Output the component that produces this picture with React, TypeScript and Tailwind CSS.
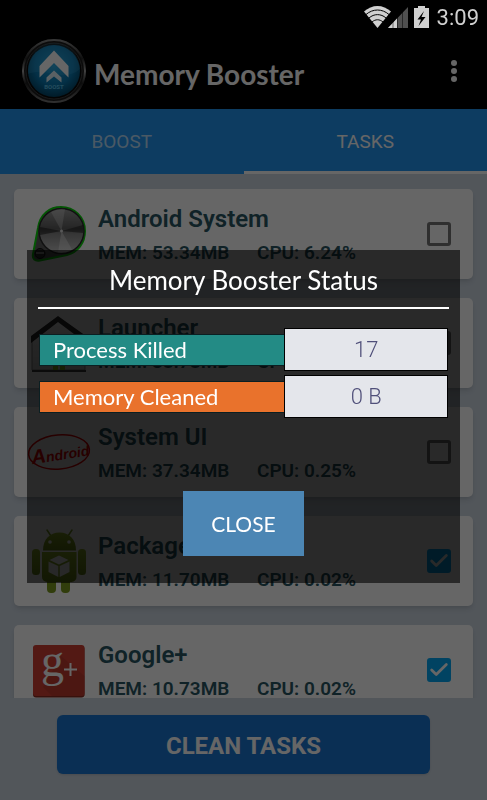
import React, { useState } from 'react';
import { Check } from 'lucide-react';

interface Task {
  name: string;
  mem: string;
  cpu: string;
  icon: React.ReactNode;
}

const BoostLogo = () => (
  <svg viewBox="0 0 66 66" className="w-[66px] h-[66px] shrink-0" aria-hidden="true">
    <defs>
      <linearGradient id="ring" x1="0" y1="0" x2="0" y2="1">
        <stop offset="0" stopColor="#8a8a8a" />
        <stop offset="0.3" stopColor="#2a2a2a" />
        <stop offset="0.5" stopColor="#a5a5a5" />
        <stop offset="0.7" stopColor="#222" />
        <stop offset="1" stopColor="#777" />
      </linearGradient>
      <radialGradient id="disc" cx="0.5" cy="0.4" r="0.62">
        <stop offset="0" stopColor="#1fa3dc" />
        <stop offset="0.6" stopColor="#0a78b0" />
        <stop offset="1" stopColor="#02405f" />
      </radialGradient>
    </defs>
    <circle cx="33" cy="33" r="32" fill="#1d1d1d" />
    <circle cx="33" cy="33" r="31" fill="none" stroke="url(#ring)" strokeWidth="2" />
    <circle cx="33" cy="33" r="28" fill="#0b0b0b" stroke="#4a4a4a" strokeWidth="0.800" />
    <circle cx="33" cy="33" r="26" fill="url(#disc)" />
    <path d="M7 31a26 26 0 0 1 52 0c-8 7-18 7-26 5S15 33 7 36z" fill="#5cc4f0" opacity="0.18" />
    <path d="M33 12.500 47.500 28v11.500L33 25 18.500 39.500V28z" fill="#fff" />
    <path d="M33 32.500l7.500 7v5L33 38.500l-7.500 6v-5z" fill="#e4f3fa" />
    <text x="33" y="51" textAnchor="middle" fontSize="6" fontWeight="700" fontFamily="Roboto, sans-serif" fill="#5cc0e8">
      BOOST
    </text>
  </svg>
);

const KnobIcon = () => (
  <svg viewBox="0 0 64 64" className="w-16 h-16 shrink-0" aria-hidden="true">
    <defs>
      <linearGradient id="knob" x1="0" y1="0" x2="0" y2="1">
        <stop offset="0" stopColor="#9a9a9a" />
        <stop offset="0.45" stopColor="#5c5c5c" />
        <stop offset="0.55" stopColor="#858585" />
        <stop offset="1" stopColor="#c4c4c4" />
      </linearGradient>
    </defs>
    <path
      d="M11 26C13 12 23 5 34 5c13 0 24 10 24 24 0 12-7 21-18 24L13 58.500C8 59.500 5 57 6 52z"
      fill="#5a5a5a"
      stroke="#0bd80b"
      strokeWidth="2"
    />
    <circle cx="34.500" cy="29" r="22.500" fill="url(#knob)" stroke="#2b2b2b" strokeWidth="1.500" />
    <path d="M34.500 29 24 10a22 22 0 0 1 14-3z" fill="#fff" opacity="0.28" />
    <path d="M34.500 29 31 50.500a22 22 0 0 0 14-3z" fill="#fff" opacity="0.35" />
    <path d="M34.500 29 13 25v8z" fill="#111" opacity="0.5" />
    <path d="M34.500 29 56 23v8z" fill="#111" opacity="0.45" />
    <circle cx="34.500" cy="29" r="1.500" fill="#ddd" />
    <circle cx="13" cy="51.500" r="5" fill="#333" stroke="#111" strokeWidth="1" />
    <path d="M9 51h8" stroke="#bbb" strokeWidth="1.500" />
  </svg>
);

const HouseIcon = () => (
  <svg viewBox="0 0 64 64" className="w-16 h-16 shrink-0" aria-hidden="true">
    <defs>
      <linearGradient id="wall" x1="0" y1="0" x2="0" y2="1">
        <stop offset="0" stopColor="#fff" />
        <stop offset="1" stopColor="#cfcfcf" />
      </linearGradient>
    </defs>
    <path d="M31 9 58 28v31H5V28z" fill="url(#wall)" stroke="#8a8a8a" strokeWidth="1" />
    <path d="M5 60h54" stroke="#444" strokeWidth="2" />
    <path d="M31 5 59 25v7L31 11 4 32v-7z" fill="#2c2c2c" />
    <path d="M26 53h5v6h-5zM33 53h5v6h-5z" fill="#8fc31f" />
  </svg>
);

const KitKatIcon = () => (
  <svg viewBox="0 0 64 64" className="w-16 h-16 shrink-0" aria-hidden="true">
    <ellipse cx="32" cy="32" rx="30.500" ry="17" fill="none" stroke="#f00000" strokeWidth="1.500" transform="rotate(-5 32 32)" />
    <text
      x="4"
      y="40"
      transform="rotate(-9 32 32)"
      fontFamily="'Liberation Sans', sans-serif"
      fontStyle="italic"
      fontWeight="700"
      fontSize="14"
      fill="#f00000"
    >
      <tspan fontSize="20">A</tspan>ndroid
    </text>
  </svg>
);

const RobotIcon = () => (
  <svg viewBox="0 0 64 64" className="w-16 h-16 shrink-0" aria-hidden="true">
    <defs>
      <linearGradient id="robot" x1="0" y1="0" x2="0" y2="1">
        <stop offset="0" stopColor="#98ba28" />
        <stop offset="1" stopColor="#6f8f18" />
      </linearGradient>
    </defs>
    <path d="M20 1l4 6M45 1l-4 6" stroke="#7f9f20" strokeWidth="1.500" strokeLinecap="round" />
    <path d="M16 21.500C16 10 23 3.500 32.500 3.500S49 10 49 21.500z" fill="url(#robot)" />
    <circle cx="23" cy="13" r="1.800" fill="#fff" />
    <circle cx="42" cy="13" r="1.800" fill="#fff" />
    <rect x="20" y="46" width="9" height="18" rx="4" fill="#7a9a1e" />
    <rect x="34" y="46" width="9" height="18" rx="4" fill="#7a9a1e" />
    <rect x="5" y="20" width="8" height="26" rx="3.500" fill="url(#robot)" />
    <rect x="51" y="20" width="8" height="26" rx="3.500" fill="url(#robot)" />
    <path d="M15 23h34.500v25a5 5 0 0 1-5 5H20a5 5 0 0 1-5-5z" fill="url(#robot)" />
    <path d="M32 26.500 41.500 31 32 35.500 22.500 31z" fill="#fff" />
    <path d="M21.500 32.500 31.300 37v11L21.500 43z" fill="#f4f4f4" />
    <path d="M42.500 32.500 32.700 37v11l9.800-5z" fill="#f4f4f4" />
  </svg>
);

const GooglePlusIcon = () => (
  <svg viewBox="0 0 64 64" className="w-16 h-16 shrink-0" aria-hidden="true">
    <rect x="6" y="8" width="51.500" height="51.500" rx="3" fill="#8a2c22" />
    <rect x="6" y="7" width="51.500" height="51" rx="3" fill="#cf4034" />
    <path d="M34 18 57.500 38v20H25l-9-9z" fill="#a8332a" opacity="0.45" />
    <text x="14" y="38" fontFamily="'Liberation Serif', serif" fontSize="46" fill="#fff">
      g
    </text>
    <path d="M43.500 25v13M37 31.500h13" stroke="#fff" strokeWidth="2" />
  </svg>
);

const StatusIcons = () => (
  <svg viewBox="0 0 66 24" className="w-[66px] h-6" aria-hidden="true">
    <path d="M0 6.500C8-1 19-1 27 6.500L13.500 23z" fill="#d0d0d0" />
    <path
      d="M2 9.500c7-6 16-6 23 0M5 13c5-4.500 12-4.500 17 0M8 17c3.500-3 7.500-3 11 0"
      fill="none"
      stroke="#000"
      strokeWidth="1"
    />
    <path d="M44 2v21H24z" fill="#505050" />
    <path d="M33 13.500V23h-9z" fill="#d0d0d0" />
    <path d="M29 9v14M33.500 5v18M38.500 2v21" stroke="#000" strokeWidth="0.500" />
    <path d="M54 1h7v2h4v20H50V3h4z" fill="#d0d0d0" />
    <path d="M60 6l-6.500 8.500h3.500L54.500 21l7-9h-4z" fill="#000" />
  </svg>
);

const tasks: Task[] = [
  { name: 'Android System', mem: '53.34MB', cpu: '6.24%', icon: <KnobIcon /> },
  { name: 'Launcher', mem: '38.78MB', cpu: '0.00%', icon: <HouseIcon /> },
  { name: 'System UI', mem: '37.34MB', cpu: '0.25%', icon: <KitKatIcon /> },
  { name: 'Package Installer', mem: '11.70MB', cpu: '0.02%', icon: <RobotIcon /> },
  { name: 'Google+', mem: '10.73MB', cpu: '0.02%', icon: <GooglePlusIcon /> },
];

interface TaskCardProps {
  task: Task;
  checked: boolean;
  onToggle: () => void;
}

const TaskCard: React.FC<TaskCardProps> = ({ task, checked, onToggle }) => (
  <li className="shrink-0 bg-white rounded-[5px] shadow-md">
    <label className="flex items-center h-[90px] pl-[13px] pr-[22px]">
      {task.icon}
      <span className="flex-1 pl-[7px] font-semibold text-[#285663]">
        <span className="block text-2xl leading-8">{task.name}</span>
        <span className="flex mt-[6px] text-[19px] leading-6">
          <span className="w-[159px]">MEM: {task.mem}</span>
          <span>CPU: {task.cpu}</span>
        </span>
      </span>
      <span className="relative flex">
        <input
          type="checkbox"
          checked={checked}
          onChange={onToggle}
          className="appearance-none w-6 h-6 rounded-[3px] border-[3px] border-[#757575] checked:border-[#03a9f4] checked:bg-[#03a9f4]"
        />
        {checked && <Check size={22} strokeWidth={3} className="absolute top-px left-px text-white pointer-events-none" />}
      </span>
    </label>
  </li>
);

interface StatusRowProps {
  label: string;
  value: string;
  color: string;
}

const StatusRow: React.FC<StatusRowProps> = ({ label, value, color }) => (
  <div className="flex items-center">
    <dt className={`w-3/5 h-8 pl-[13px] border border-[#0b1f22] border-r-0 text-[22px] leading-[30px] text-white ${color}`}>
      {label}
    </dt>
    <dd className="w-2/5 h-[43px] border border-black bg-[#e4e6eb] text-center font-['Roboto',sans-serif] text-[22px] leading-[41px] font-light text-[#50507a]">
      {value}
    </dd>
  </div>
);

export default function App() {
  const [selected, setSelected] = useState<string[]>(['Package Installer', 'Google+']);
  const [open, setOpen] = useState(true);

  const toggle = (name: string) => {
    setSelected(selected.includes(name) ? selected.filter((n) => n !== name) : [...selected, name]);
  };

  return (
    <div className="flex flex-col h-screen bg-[#cdd7e2] font-['Roboto',sans-serif]">
      <div className="relative z-20 flex items-center justify-end h-[33px] pr-2 bg-black">
        <StatusIcons />
        <span className="pl-[7px] pt-[3px] text-[22px] leading-8 text-[#d0d0d0]">3:09</span>
      </div>

      <header className="flex items-center h-[76px] pl-[21px] pr-[22px] bg-black text-white">
        <BoostLogo />
        <h1 className="flex-1 pl-[7px] pt-[6px] font-['Lato',sans-serif] text-[28px] leading-9 font-bold">Memory Booster</h1>
        <button aria-label="More options" className="flex flex-col gap-[2px] p-2">
          <span className="w-[6px] h-[6px] rounded-full bg-white" />
          <span className="w-[6px] h-[6px] rounded-full bg-white" />
          <span className="w-[6px] h-[6px] rounded-full bg-white" />
        </button>
      </header>

      <nav className="flex h-[65px] shrink-0 bg-[#2196f3] text-[19px] text-white">
        <button className="flex-1 pt-[5px] border-b-[3px] border-transparent text-white/70">BOOST</button>
        <button className="flex-1 pt-[5px] border-b-[3px] border-white">TASKS</button>
      </nav>

      <ul className="flex flex-col flex-1 min-h-0 gap-[19px] px-[14px] pt-[15px] overflow-hidden">
        {tasks.map((task) => (
          <TaskCard
            key={task.name}
            task={task}
            checked={selected.includes(task.name)}
            onToggle={() => toggle(task.name)}
          />
        ))}
      </ul>

      <div className="flex px-[57px] pt-[17px] pb-[26px]">
        <button className="flex-1 h-[59px] pt-[3px] rounded-md bg-[#1976d2] text-2xl font-bold text-white shadow-sm">
          CLEAN TASKS
        </button>
      </div>

      {open && (
        <div className="fixed inset-0 z-10 flex items-center px-[27px] pt-[33px] bg-black/60">
          <div
            role="dialog"
            aria-labelledby="status-title"
            className="flex-1 flex flex-col items-center px-[11px] pt-3 pb-[27px] bg-black/60 font-['Lato',sans-serif] text-white"
          >
            <h2 id="status-title" className="text-[26px] leading-9">
              Memory Booster Status
            </h2>
            <hr className="w-full mt-[9px] border-0 h-[2px] bg-white" />
            <dl className="flex flex-col gap-1 w-full px-px mt-[19px]">
              <StatusRow label="Process Killed" value="17" color="bg-[#238b85]" />
              <StatusRow label="Memory Cleaned" value="0 B" color="bg-[#e9722c]" />
            </dl>
            <button onClick={() => setOpen(false)} className="mt-[73px] px-7 h-[65px] bg-[#4c86b4] text-[21px]">
              CLOSE
            </button>
          </div>
        </div>
      )}
    </div>
  );
}
